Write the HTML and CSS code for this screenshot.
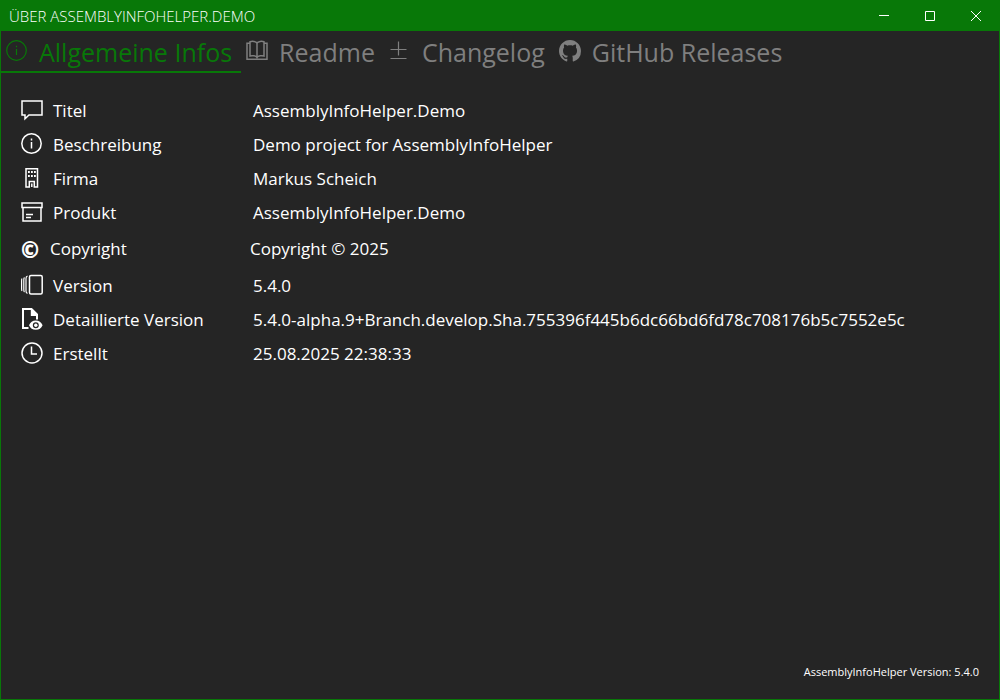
FILE: index.html
```html
<!DOCTYPE html>
<html lang="de">
<head>
<meta charset="utf-8">
<title>Über AssemblyInfoHelper.Demo</title>
<link rel="stylesheet" href="styles.css">
</head>
<body>
<div class="window">
  <header class="titlebar">
    <h1 class="title">ÜBER ASSEMBLYINFOHELPER.DEMO</h1>
    <div class="controls">
      <button class="control" type="button" aria-label="Minimieren"><svg width="12" height="12" viewBox="0 0 12 12"><path d="M1 5.500h10"/></svg></button>
      <button class="control" type="button" aria-label="Maximieren"><svg width="12" height="12" viewBox="0 0 12 12"><path d="M1.500 1.500h9v9h-9z"/></svg></button>
      <button class="control" type="button" aria-label="Schließen"><svg width="12" height="12" viewBox="0 0 12 12"><path d="M1 1l10 10M11 1L1 11"/></svg></button>
    </div>
  </header>
  <nav class="tabs" role="tablist">
    <button class="tab active" type="button" role="tab" aria-selected="true">
      <svg class="icon thin" viewBox="0 0 22 22"><circle cx="10.500" cy="10.500" r="9.800"/><path d="M10.500 9v6M10.500 5.700v1.500"/></svg>
      <span>Allgemeine Infos</span>
    </button>
    <button class="tab" type="button" role="tab" aria-selected="false">
      <svg class="icon" viewBox="0 0 22 22"><path d="M11 3C10 1.300 6 1 4 1.800v14.200c2-.6 6-.4 7 1.500 1-1.900 5-2.100 7-1.500V1.800C16 1 12 1.300 11 3zM11 3v15M4 3.200H1v16h20v-16h-3"/></svg>
      <span>Readme</span>
    </button>
    <button class="tab" type="button" role="tab" aria-selected="false">
      <svg class="icon thin" viewBox="0 0 22 22"><path d="M9.500 1.500v14M1.500 9.500h16M1.500 18.500h16"/></svg>
      <span>Changelog</span>
    </button>
    <button class="tab" type="button" role="tab" aria-selected="false">
      <svg class="icon filled" viewBox="0 0 16 16"><path d="M8 0C3.580 0 0 3.580 0 8c0 3.540 2.290 6.530 5.470 7.590.4.070.55-.17.55-.38 0-.19-.01-.82-.01-1.490-2.010.37-2.530-.49-2.690-.94-.09-.23-.48-.94-.82-1.130-.28-.15-.68-.52-.01-.53.63-.01 1.080.58 1.230.82.72 1.210 1.870.87 2.330.66.070-.52.28-.87.51-1.070-1.780-.2-3.640-.89-3.640-3.950 0-.87.31-1.590.82-2.150-.08-.2-.36-1.020.08-2.120 0 0 .67-.21 2.200.82.64-.18 1.320-.27 2-.27s1.360.09 2 .27c1.530-1.040 2.200-.82 2.200-.82.44 1.100.16 1.920.08 2.120.51.56.82 1.270.82 2.150 0 3.070-1.870 3.750-3.650 3.950.29.25.54.73.54 1.480 0 1.070-.01 1.930-.01 2.200 0 .21.15.46.55.38A8.010 8.010 0 0 0 16 8c0-4.420-3.580-8-8-8z"/></svg>
      <span>GitHub Releases</span>
    </button>
  </nav>
  <main class="content" role="tabpanel">
    <dl class="infos">
      <div class="row">
        <svg class="icon" viewBox="0 0 22 22"><path d="M1 2h20v14H8l-4 3.800V16H1z"/></svg>
        <dt>Titel</dt><dd>AssemblyInfoHelper.Demo</dd>
      </div>
      <div class="row">
        <svg class="icon" viewBox="0 0 22 22"><circle cx="10.500" cy="10.500" r="9.700"/><path d="M10.500 9v6.500M10.500 5.500v2"/></svg>
        <dt>Beschreibung</dt><dd>Demo project for AssemblyInfoHelper</dd>
      </div>
      <div class="row">
        <svg class="icon" viewBox="0 0 22 22"><path d="M5 1.700h11.500v18.300h-3.200v-5.500h-5V20H5zM10.800 16.500V20"/><path class="heavy" d="M7 5h1.800M10 5h1.800M13 5h1.800M7 9h1.800M10 9h1.800M13 9h1.800"/></svg>
        <dt>Firma</dt><dd>Markus Scheich</dd>
      </div>
      <div class="row">
        <svg class="icon" viewBox="0 0 22 22"><path d="M1 2h20v4.500H1zM2 6.500V20h18V6.500M5 13.500h7M5 16.500h5"/></svg>
        <dt>Produkt</dt><dd>AssemblyInfoHelper.Demo</dd>
      </div>
      <div class="row copyright">
        <span class="mark" aria-hidden="true">©</span>
        <dt>Copyright</dt><dd>Copyright © 2025</dd>
      </div>
      <div class="row">
        <svg class="icon" viewBox="0 0 22 22"><rect x="8.500" y="1.500" width="12.700" height="18.500" rx="1.500"/><path class="thin" d="M6.500 2.200Q5 2.500 5 4.500v12.500q0 2 1.500 2.300M3.500 3.500Q2.800 4 2.800 6v9.500q0 2 .7 2.500M1 4.500Q.600 5 .600 7v7.500q0 2 .4 2.500"/></svg>
        <dt>Version</dt><dd>5.4.0</dd>
      </div>
      <div class="row">
        <svg class="icon" viewBox="0 0 22 22"><path class="heavy" d="M7.500 20H2V1h8.500l5.500 5.500v5"/><path class="solid" d="M9.800.500v7.500h7.200z"/><path class="solid" fill-rule="evenodd" d="M8 17.200q2-4.700 6.800-4.700t6.800 4.700q-2 4.500-6.800 4.500T8 17.200zM14.800 14.200a3 3 0 1 0 0 6 3 3 0 1 0 0-6z"/><circle class="solid" cx="14.800" cy="17.200" r="1.700"/></svg>
        <dt>Detaillierte Version</dt><dd>5.4.0-alpha.9+Branch.develop.Sha.755396f445b6dc66bd6fd78c708176b5c7552e5c</dd>
      </div>
      <div class="row">
        <svg class="icon" viewBox="0 0 22 22"><circle cx="11" cy="11" r="10"/><path d="M10.500 4.500V12H16"/></svg>
        <dt>Erstellt</dt><dd>25.08.2025 22:38:33</dd>
      </div>
    </dl>
  </main>
  <footer class="footer">AssemblyInfoHelper Version: 5.4.0</footer>
</div>
</body>
</html>
```
FILE: styles.css
```css
* { box-sizing: border-box; }

body {
  margin: 0;
  background: #252525;
  color: #fff;
  font-family: "Open Sans", "Noto Sans", sans-serif;
}

.window {
  display: flex;
  flex-direction: column;
  min-height: 100vh;
  border: 1px solid #087808;
  border-top: 0;
}

.titlebar {
  display: flex;
  justify-content: space-between;
  align-items: stretch;
  height: 31px;
  background: #087808;
}

.title {
  margin: 0;
  padding-left: 8px;
  font-size: 15px;
  font-weight: 300;
  line-height: 32px;
}

.controls { display: flex; }

button {
  border: 0;
  padding: 0;
  background: none;
  color: inherit;
  font-family: inherit;
}

.control {
  display: grid;
  place-items: center;
  width: 46px;
}

svg {
  display: block;
  fill: none;
  stroke: currentColor;
}

.tabs { display: flex; }

.tab {
  display: flex;
  align-items: center;
  gap: 11px;
  height: 42px;
  padding: 0 9px 0 5px;
  border-bottom: 2px solid transparent;
  color: #7f7f7f;
  font-size: 25px;
  line-height: 40px;
  white-space: nowrap;
}

.tab span { padding-top: 2px; }

.tab.active {
  border-bottom-color: #087808;
  color: #087808;
}

.icon {
  flex: none;
  width: 22px;
  height: 22px;
  stroke-width: 1.5;
}

.thin { stroke-width: 1.2; }

.filled,
.solid {
  fill: currentColor;
  stroke: none;
}

.heavy { stroke-width: 2; }

.content {
  flex: 1;
  padding: 20px;
}

.infos {
  margin: 0;
  font-size: 17px;
}

.row {
  display: flex;
  align-items: center;
  min-height: 34px;
}

.row dt {
  width: 200px;
  margin-left: 10px;
}

.row dd { margin: 0; }

.copyright { min-height: 39px; }

.mark {
  width: 19px;
  font-size: 22px;
  font-weight: 800;
  line-height: 30px;
}

.footer {
  padding: 0 20px 19px;
  font-size: 11px;
  line-height: 16px;
  text-align: right;
}
```
